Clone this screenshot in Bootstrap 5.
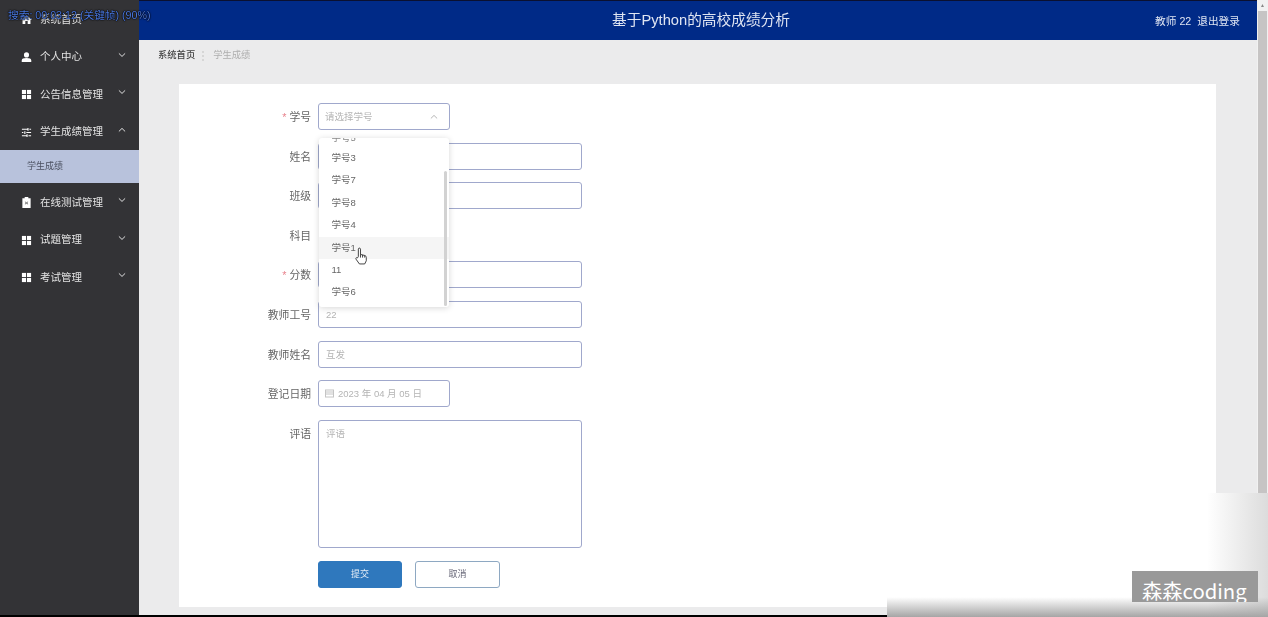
<!DOCTYPE html>
<html lang="zh-CN">
<head>
  <meta charset="UTF-8">
  <title>基于Python的高校成绩分析</title>
  <link href="https://cdn.jsdelivr.net/npm/bootstrap@5.3.0/dist/css/bootstrap.min.css" rel="stylesheet">
  <style>
    html, body { height: 100%; overflow: hidden; }
    body { font-family: "Liberation Sans", "Noto Sans CJK SC", sans-serif; background: #000; }
    .app-shell { height: 615px; filter: blur(.5px); background: #ebebec; }
    .side-menu { width: 139px; background: #333336; color: #e4e4e4; font-size: 10.5px; }
    .menu-row { height: 37.5px; padding: 2px 13px 0 21px; gap: 8px; }
    .menu-row span { flex: 1; }
    .menu-first { height: 37.6px; }
    .menu-sub { height: 33px; background: #b8c2dc; color: #4b5060; font-size: 9px; padding-left: 27px; }
    .menu-icon { width: 11px; height: 11px; fill: #fff; flex: none; }
    .chev { width: 8px; height: 6px; fill: none; stroke: currentColor; stroke-width: 1.1; flex: none; margin-bottom: 5px; }
    .top-head { height: 40px; background: #002a87; color: #dfe5f2; border-top: 1px solid #0a1030; }
    .top-title { font-size: 14.7px; padding-left: 6px; }
    .top-user { right: 17px; top: 12px; font-size: 10.7px; }
    .crumbs { height: 30px; padding: 2px 0 0 19px; font-size: 9.3px; color: #aeaeae; gap: 6px; }
    .crumbs b { color: #444; font-weight: 500; }
    .crumb-dots { width: 2px; height: 10px; border-left: 2px dotted #d6d6d6; margin: 0 3px 0 1px; }
    .form-sheet { margin: 14px 41px 0 40px; height: 523px; background: #fff; padding-top: 19px; gap: 12.6px; }
    .form-line { gap: 7px; }
    .form-line label { width: 132px; height: 27px; padding-top: 1px; text-align: right; font-size: 10.8px; color: #666; line-height: 27px; flex: none; }
    .req { color: #e8838d; margin-right: 3px; }
    .soft-input { width: 264px; height: 27px; border: 1px solid #a0a8cc; border-radius: 3px; font-size: 9.5px; color: #b4b4b4; padding: 0 7px; line-height: 25px; background: #fff; }
    .soft-short { width: 132px; }
    .soft-area { height: 128px; }
    .soft-input.pick { padding-left: 6px; }
    .soft-select { padding-left: 6px; }
    .btn-ok, .btn-no { width: 84px; height: 27px; border-radius: 3px; font-size: 9px; padding: 0; line-height: 25px; }
    .btn-ok { background: #2f78bd; border: 1px solid #2f78bd; color: #e4edf6; }
    .btn-no { background: #fff; border: 1px solid #8ea8c2; color: #667; width: 85px; }
    .btn-pair { gap: 13px; margin-top: 1px; }
    .drop-list { left: 140px; top: 54px; width: 130px; height: 169px; background: #fff; box-shadow: 0 1px 6px rgba(0,0,0,.16); border-radius: 3px; overflow: hidden; font-size: 9.5px; color: #666; }
    .drop-item { height: 22.4px; line-height: 22.4px; padding-left: 12.5px; }
    .drop-hot { background: #f5f5f5; }
    .drop-cut { height: 9px; line-height: 0; color: #888; }
    .drop-bar { right: 2px; top: 33px; width: 3px; height: 135px; background: #d2d2d2; border-radius: 2px; }
    .hand-cursor { left: 176px; top: 163px; width: 12px; height: 18px; }
    .scroll-rail { width: 11px; background: #f1f1f1; }
    .scroll-arrow { height: 11px; color: #888; font-size: 5px; line-height: 11px; text-align: center; }
    .scroll-thumb { height: 482px; margin: 0 1px; background: #c6c4c4; }
    .seek-text { left: 8px; top: 7px; font-size: 10.7px; color: #4a78e0; white-space: nowrap; text-shadow: 0 0 1px #000, 0 0 1px #000, 0 0 2px #000; z-index: 5; }
    .mark-cover { right: 0; bottom: 0; width: 381px; height: 124px; z-index: 6;
      background: linear-gradient(180deg, rgba(165,165,165,0) 84%, rgba(165,165,165,1) 100%), linear-gradient(90deg, #fff 84%, #dcdcdc 100%); }
    .mark-tag { right: 10px; bottom: 15px; width: 126px; height: 31px; background: #999; color: #fff; font-size: 20.3px; line-height: 39px; padding-left: 10px; overflow: hidden; white-space: nowrap; font-family: "Noto Sans CJK SC", "Open Sans", sans-serif; }
  </style>
</head>
<body>
  <svg width="0" height="0" class="position-absolute">
    <symbol id="i-home" viewBox="0 0 12 12"><path d="M6 1 0 6.500h1.700V11h3V7.600h2.600V11h3V6.500H12z"/></symbol>
    <symbol id="i-user" viewBox="0 0 12 12"><circle cx="6" cy="3.200" r="2.800"/><path d="M.8 11V9.200C.8 7.500 2.600 6.600 6 6.600s5.200.9 5.200 2.600V11z"/></symbol>
    <symbol id="i-grid" viewBox="0 0 12 12"><rect x="1" y="1" width="4.500" height="4.500"/><rect x="6.500" y="1" width="4.500" height="4.500"/><rect x="1" y="6.500" width="4.500" height="4.500"/><rect x="6.500" y="6.500" width="4.500" height="4.500"/></symbol>
    <symbol id="i-tune" viewBox="0 0 12 12"><path d="M1 2h6V1h1.200v3H7V3H1zM9.200 2H11v1H9.200zM1 5.500h1.600v1H1zM3.600 4.500h1.200v3H3.600zM5.800 5.500H11v1H5.800zM1 9h5V8h1.200v3H6v-1H1zM8.200 9H11v1H8.200z"/></symbol>
    <symbol id="i-clip" viewBox="0 0 12 12"><path d="M4 0h4v1.300h2.500V12h-9V1.300H4z"/><path fill="#666" d="M4.600 4.800 6 6l1.400-1.200.5.500L6.700 6.500l1.200 1.200-.5.500L6 7 4.600 8.200l-.5-.5 1.200-1.200-1.200-1.200z"/></symbol>
    <symbol id="i-down" viewBox="0 0 9 6"><path d="M1 1.200 4.500 4.600 8 1.200"/></symbol>
    <symbol id="i-up" viewBox="0 0 9 6"><path d="M1 4.600 4.500 1.200 8 4.600"/></symbol>
  </svg>

  <div class="app-shell d-flex position-relative">
    <div class="seek-text position-absolute">搜索: 00:03:12 (关键帧) (90%)</div>

    <aside class="side-menu flex-shrink-0">
      <div class="menu-row menu-first d-flex align-items-center"><svg class="menu-icon"><use href="#i-home"/></svg><span>系统首页</span></div>
      <div class="menu-row d-flex align-items-center"><svg class="menu-icon"><use href="#i-user"/></svg><span>个人中心</span><svg class="chev"><use href="#i-down"/></svg></div>
      <div class="menu-row d-flex align-items-center"><svg class="menu-icon"><use href="#i-grid"/></svg><span>公告信息管理</span><svg class="chev"><use href="#i-down"/></svg></div>
      <div class="menu-row d-flex align-items-center"><svg class="menu-icon"><use href="#i-tune"/></svg><span>学生成绩管理</span><svg class="chev"><use href="#i-up"/></svg></div>
      <div class="menu-sub d-flex align-items-center">学生成绩</div>
      <div class="menu-row d-flex align-items-center"><svg class="menu-icon"><use href="#i-clip"/></svg><span>在线测试管理</span><svg class="chev"><use href="#i-down"/></svg></div>
      <div class="menu-row d-flex align-items-center"><svg class="menu-icon"><use href="#i-grid"/></svg><span>试题管理</span><svg class="chev"><use href="#i-down"/></svg></div>
      <div class="menu-row d-flex align-items-center"><svg class="menu-icon"><use href="#i-grid"/></svg><span>考试管理</span><svg class="chev"><use href="#i-down"/></svg></div>
    </aside>

    <div class="flex-grow-1 d-flex flex-column">
      <header class="top-head d-flex align-items-center justify-content-center position-relative">
        <div class="top-title">基于Python的高校成绩分析</div>
        <div class="top-user position-absolute">教师 22 &nbsp;退出登录</div>
      </header>
      <nav class="crumbs d-flex align-items-center"><b>系统首页</b><span class="crumb-dots"></span><span>学生成绩</span></nav>

      <main class="form-sheet d-flex flex-column position-relative">
        <div class="form-line d-flex"><label><span class="req">*</span>学号</label>
          <div class="soft-input soft-short soft-select d-flex align-items-center justify-content-between"><span>请选择学号</span><svg class="chev mb-0 me-1"><use href="#i-up"/></svg></div></div>
        <div class="form-line d-flex"><label>姓名</label><div class="soft-input"></div></div>
        <div class="form-line d-flex"><label>班级</label><div class="soft-input"></div></div>
        <div class="form-line d-flex"><label>科目</label><div class="soft-input border-0"></div></div>
        <div class="form-line d-flex"><label><span class="req">*</span>分数</label><div class="soft-input"></div></div>
        <div class="form-line d-flex"><label>教师工号</label><div class="soft-input">22</div></div>
        <div class="form-line d-flex"><label>教师姓名</label><div class="soft-input">互发</div></div>
        <div class="form-line d-flex"><label>登记日期</label>
          <div class="soft-input soft-short pick d-flex align-items-center gap-1"><svg width="9" height="9" viewBox="0 0 9 9" fill="none" stroke="#c4c4c4"><rect x=".5" y="1" width="8" height="7"/><path d="M.5 3h8M.5 5h8"/></svg><span>2023 年 04 月 05 日</span></div></div>
        <div class="form-line d-flex"><label>评语</label><div class="soft-input soft-area">评语</div></div>
        <div class="form-line d-flex"><label></label>
          <div class="d-flex btn-pair"><button type="button" class="btn-ok">提交</button><button type="button" class="btn-no">取消</button></div></div>

        <div class="drop-list position-absolute">
          <div class="drop-item drop-cut">学号5</div>
          <div class="drop-item">学号3</div>
          <div class="drop-item">学号7</div>
          <div class="drop-item">学号8</div>
          <div class="drop-item">学号4</div>
          <div class="drop-item drop-hot">学号1</div>
          <div class="drop-item">11</div>
          <div class="drop-item">学号6</div>
          <div class="drop-bar position-absolute"></div>
        </div>
        <svg class="hand-cursor position-absolute" viewBox="0 0 11 17" fill="#fff" stroke="#222" stroke-width=".8"><path d="M3 9V2c0-1.300 2-1.300 2 0v5l4 1c1 .3 1.500 1 1.500 2v3L9 16H4L.8 11.500c-.6-1 .6-2 1.400-1.200z"/><path d="M5 7v3M7 7.500V10M9 8v2" fill="none"/></svg>
      </main>
    </div>

    <div class="scroll-rail flex-shrink-0"><div class="scroll-arrow">▲</div><div class="scroll-thumb"></div></div>
  </div>

  <div class="mark-cover position-absolute"><div class="mark-tag position-absolute">森森coding</div></div>
</body>
</html>
